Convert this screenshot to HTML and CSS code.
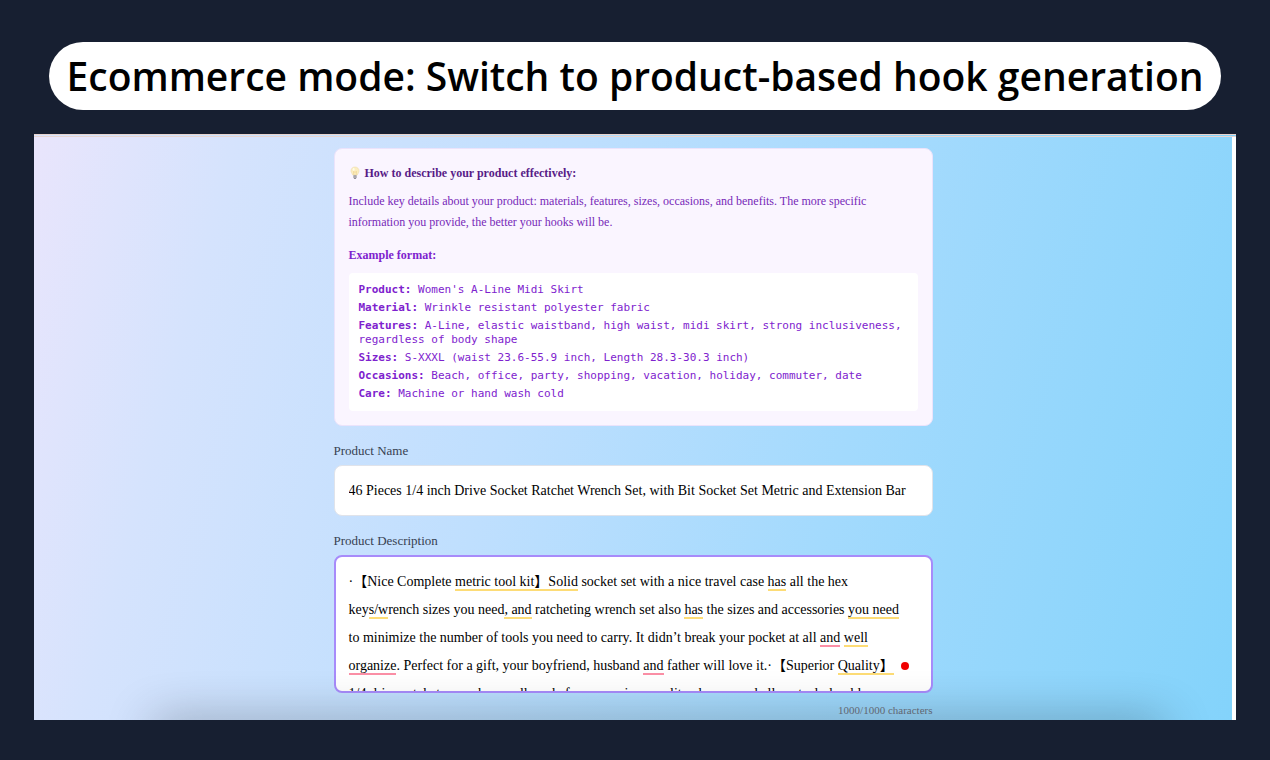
FILE: index.html
```html
<!DOCTYPE html>
<html lang="en">
<head>
  <meta charset="UTF-8">
  <meta name="viewport" content="width=device-width, initial-scale=1.0">
  <title>Ecommerce mode</title>
  <link rel="stylesheet" href="styles.css">
</head>
<body>

  <header class="banner">
    <h1>Ecommerce mode: Switch to product-based hook generation</h1>
  </header>

  <main class="screen">
    <form class="form">

      <section class="tips">
        <h2>
          <svg class="bulb" viewBox="0 0 12 14" aria-hidden="true">
            <path d="M6 1C3.6 1 2 2.7 2 4.8c0 1.6 1 2.6 1.7 4.2h4.6C9 7.4 10 6.4 10 4.8 10 2.700 8.400 1 6 1z" fill="#fbedc0" stroke="#ecdcaa" stroke-width=".6"/>
            <path d="M4.800 8.800 4.500 5.500 6 6.300l1.500-.8-.3 3.300" fill="none" stroke="#e9c67c" stroke-width=".5"/>
            <ellipse cx="4.600" cy="3.400" rx="1" ry="1.400" fill="#fffbe8"/>
            <path d="M4.400 9.200h3.200v2.300L6.800 13H5.200l-.8-1.500z" fill="#8f8d96"/>
            <path d="M4.400 10.300h3.200M4.500 11.500h3" stroke="#c9c7ce" stroke-width=".5"/>
          </svg>
          How to describe your product effectively:
        </h2>
        <p class="intro">Include key details about your product: materials, features, sizes, occasions, and benefits. The more specific information you provide, the better your hooks will be.</p>
        <h3>Example format:</h3>
        <div class="example">
          <p><strong>Product:</strong> Women's A-Line Midi Skirt</p>
          <p><strong>Material:</strong> Wrinkle resistant polyester fabric</p>
          <p><strong>Features:</strong> A-Line, elastic waistband, high waist, midi skirt, strong inclusiveness, regardless of body shape</p>
          <p><strong>Sizes:</strong> S-XXXL (waist 23.6-55.9 inch, Length 28.3-30.3 inch)</p>
          <p><strong>Occasions:</strong> Beach, office, party, shopping, vacation, holiday, commuter, date</p>
          <p><strong>Care:</strong> Machine or hand wash cold</p>
        </div>
      </section>

      <div class="field">
        <label for="name">Product Name</label>
        <input id="name" type="text" value="46 Pieces 1/4 inch Drive Socket Ratchet Wrench Set, with Bit Socket Set Metric and Extension Bar">
      </div>

      <div class="field">
        <label for="description">Product Description</label>
        <div class="editor" id="editor">
          <textarea id="description" maxlength="1000" spellcheck="false">·【Nice Complete metric tool kit】Solid socket set with a nice travel case has all the hex keys/wrench sizes you need, and ratcheting wrench set also has the sizes and accessories you need to minimize the number of tools you need to carry. It didn’t break your pocket at all and well organize. Perfect for a gift, your boyfriend, husband and father will love it.·【Superior Quality】1/4 drive ratchet wrenches, well made from premium quality chrome and alloy steel, durable</textarea>
          <span class="dot"></span>
        </div>
        <p class="counter">1000/1000 characters</p>
      </div>

    </form>
  </main>

  <script src="script.js"></script>
</body>
</html>
```
FILE: styles.css
```css
* {
  box-sizing: border-box;
}

body {
  margin: 0;
  min-height: 100vh;
  padding: 42px 34px 40px;
  display: flex;
  flex-direction: column;
  gap: 24px;
  background-color: #171f31;
  font-family: "Liberation Serif", "Times New Roman", serif;
}

h1, h2, h3, p {
  margin: 0;
}

.banner {
  margin: 0 15px;
  padding: 4px 16px;
  border-radius: 34px;
  background-color: #fff;
  text-align: center;
}

.banner h1 {
  font-family: "Open Sans", sans-serif;
  font-size: 39px;
  font-weight: 600;
  line-height: 60px;
  color: #000;
  white-space: nowrap;
}

.screen {
  flex: 1 0 0;
  height: 0;
  overflow: hidden;
  position: relative;
  padding-right: 4px;
  border-top: 3px double #e8d5d0;
  box-shadow: inset -4px 0 #fff;
  background: linear-gradient(105deg, #e9e5fc 0%, #d5e3fd 15%, #bfdffe 40%, #a3dafd 66%, #83d3fb 100%);
}

/* soft shadow rising from the bottom edge */
.screen::after {
  content: "";
  position: absolute;
  left: 10%;
  right: 6%;
  bottom: -24px;
  height: 20px;
  box-shadow: 0 0 48px rgba(0, 0, 0, 0.45);
}

.form {
  width: 50%;
  min-width: 598px;
  margin: 0 auto;
  padding-top: 11px;
}

.tips {
  margin-bottom: 16px;
  padding: 14px;
  border: 1px solid #ebe3fb;
  border-radius: 8px;
  background-color: #faf5ff;
  color: #7e22ce;
}

.tips h2 {
  display: flex;
  align-items: center;
  gap: 4px;
  margin-bottom: 8px;
  font-size: 12px;
  line-height: 20px;
  color: #581c87;
}

.bulb {
  width: 12px;
  height: 14px;
}

.intro {
  margin-bottom: 12px;
  font-size: 12px;
  line-height: 21px;
  color: #7729b8;
}

.tips h3 {
  margin-bottom: 8px;
  font-size: 12px;
  line-height: 20px;
}

.example {
  display: flex;
  flex-direction: column;
  gap: 4px;
  padding: 10px;
  border-radius: 4px;
  background-color: #fff;
  font-family: "DejaVu Sans Mono", monospace;
  font-size: 11px;
  line-height: 14px;
}

.field {
  margin-bottom: 16px;
}

.field label {
  display: block;
  margin-bottom: 5px;
  font-size: 13px;
  line-height: 18px;
  color: #374151;
}

input, textarea, .mirror {
  display: block;
  width: 100%;
  padding: 10px 14px;
  border: 1px solid #e0e3ea;
  border-radius: 8px;
  background-color: #fff;
  font-family: "Liberation Serif", "Noto Sans CJK SC", serif;
  font-size: 14px;
  color: #000;
}

input {
  height: 51px;
}

.editor {
  position: relative;
}

textarea, .mirror {
  height: 138px;
  border: 2px solid #a78bfa;
  padding: 11px 21px 11px 13px;
  line-height: 28px;
  text-spacing-trim: space-all;
  white-space: pre-wrap;
  overflow-wrap: break-word;
  resize: none;
  overflow: hidden;
  outline: none;
}

/* same box as the textarea, used only to measure words */
.mirror {
  position: absolute;
  inset: 0;
  visibility: hidden;
}

.mark {
  position: absolute;
  height: 2px;
  background-color: #fddc76;
  pointer-events: none;
}

.mark.error {
  background-color: #fb8fa6;
}

.dot {
  position: absolute;
  right: 24px;
  bottom: 23px;
  width: 8px;
  height: 8px;
  border-radius: 50%;
  background-color: #f00000;
}

.counter {
  margin-top: 10px;
  font-size: 11px;
  line-height: 14px;
  text-align: right;
  color: #6b7280;
}
```
FILE: script.js
```js
// [text before the word, word, type]
const hints = [
  ["Complete ", "metric tool kit】Solid", "hint"],
  ["case ", "has", "hint"],
  ["key", "s/w", "hint"],
  ["need", ", and", "hint"],
  ["also ", "has", "hint"],
  ["accessories ", "you need", "hint"],
  ["at all ", "and", "error"],
  ["and ", "well", "hint"],
  ["well ", "organize", "error"],
  ["husband ", "and", "error"],
  ["Superior ", "Quality】", "hint"]
];

const editor = document.getElementById("editor");
const text = document.getElementById("description").value;

function drawMarks() {
  editor.querySelectorAll(".mark").forEach(m => m.remove());

  const mirror = document.createElement("div");
  mirror.className = "mirror";
  mirror.textContent = text;
  editor.append(mirror);

  const box = editor.getBoundingClientRect();
  const range = document.createRange();

  hints.forEach(([before, word, type]) => {
    const start = text.indexOf(before + word) + before.length;
    range.setStart(mirror.firstChild, start);
    range.setEnd(mirror.firstChild, start + word.length);

    const rects = [...range.getClientRects()];
    const left = Math.min(...rects.map(r => r.left));
    const right = Math.max(...rects.map(r => r.right));
    const line = Math.floor((rects[0].top + rects[0].height / 2 - box.top - 13) / 28);

    const mark = document.createElement("span");
    mark.className = "mark " + type;
    mark.style.left = left - box.left + "px";
    mark.style.width = right - left + "px";
    mark.style.top = line * 28 + 34 + "px";
    editor.append(mark);
  });

  mirror.remove();
}

drawMarks();
window.addEventListener("resize", drawMarks);
```
